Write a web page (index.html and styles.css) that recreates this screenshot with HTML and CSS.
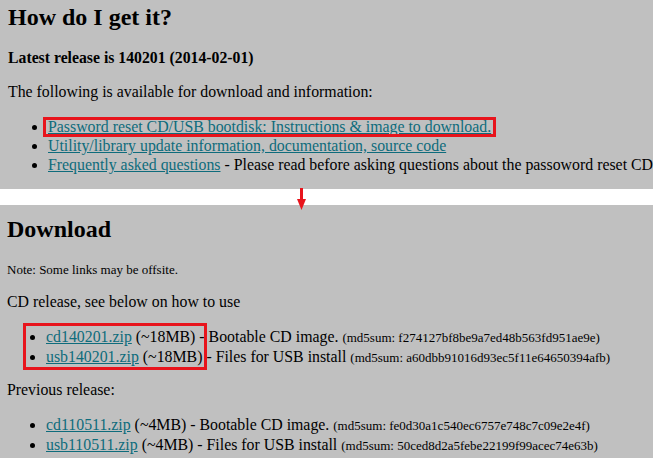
FILE: index.html
```html
<!DOCTYPE html>
<html lang="en">

<head>
    <meta charset="utf-8">
    <title>How do I get it?</title>
    <link rel="stylesheet" href="styles.css">
</head>

<body>
    <div class="shot shot-top">
        <h1>How do I get it?</h1>
        <h3>Latest release is 140201 (2014-02-01)</h3>
        <p>The following is available for download and information:</p>
        <ul>
            <li><span class="mark"><a href="#">Password reset CD/USB bootdisk: Instructions &amp; image to download.</a></span></li>
            <li><a href="#">Utility/library update information, documentation, source code</a></li>
            <li><a href="#">Frequently asked questions</a> - Please read before asking questions about the passoword reset CD.</li>
        </ul>
    </div>

    <!-- arrow between the two shots -->
    <svg class="arrow" width="9" height="22" viewBox="0 0 9 22">
        <rect x="3" y="0" width="3" height="12" fill="#e8141c" />
        <polygon points="0,11 9,11 4.5,22" fill="#e8141c" />
    </svg>

    <div class="shot shot-bottom">
        <h1>Download</h1>
        <p class="note">Note: Some links may be offsite.</p>
        <p>CD release, see below on how to use</p>
        <ul class="boxed">
            <li><a href="#">cd140201.zip</a> (~18MB) - Bootable CD image. <small>(md5sum: f274127bf8be9a7ed48b563fd951ae9e)</small></li>
            <li><a href="#">usb140201.zip</a> (~18MB) - Files for USB install <small>(md5sum: a60dbb91016d93ec5f11e64650394afb)</small></li>
            <div class="box"></div>
        </ul>
        <p class="prev">Previous release:</p>
        <ul>
            <li><a href="#">cd110511.zip</a> (~4MB) - Bootable CD image. <small>(md5sum: fe0d30a1c540ec6757e748c7c09e2e4f)</small></li>
            <li><a href="#">usb110511.zip</a> (~4MB) - Files for USB install <small>(md5sum: 50ced8d2a5febe22199f99acec74e63b)</small></li>
        </ul>
    </div>
</body>

</html>
```

FILE: styles.css
```css
html {
    font-family: 'Liberation Serif', 'Times New Roman', serif;
}

body {
    margin: 0px;
    background-color: #ffffff;
    color: #000000;
    position: relative;
    height: 458px;
    overflow: hidden;
}

.shot {
    background-color: #c0c0c0;
    width: 653px;
    box-sizing: border-box;
    padding: 0px 8px;
    white-space: nowrap;
    overflow: hidden;
}

.shot-top {
    height: 189px;
}

.shot-bottom {
    margin-top: 16px;
    height: 253px;
    padding-left: 7px;
}

h1 {
    font-size: 24px;
    line-height: 28px;
    margin: 3px 0px 0px;
}

.shot-bottom h1 {
    margin-top: 10px;
}

h3 {
    font-size: 15.75px;
    line-height: 19px;
    margin: 17px 0px 0px;
}

p {
    font-size: 15.85px;
    line-height: 19px;
    margin: 15px 0px 0px;
}

.note {
    font-size: 13px;
    line-height: 15px;
    margin-top: 19px;
}

.prev {
    margin-top: 13px;
}

ul {
    font-size: 15.85px;
    line-height: 19px;
    margin: 16px 0px 0px;
    padding-left: 40px;
}

.shot-bottom ul {
    padding-left: 39px;
}

a {
    color: #0e6c7c;
}

small {
    font-size: 13px;
}

.mark {
    position: relative;
}

.mark::after {
    content: "";
    position: absolute;
    left: -5px;
    right: -5px;
    top: -1px;
    bottom: -2px;
    border: 3px solid #e8141c;
}

.boxed {
    position: relative;
}

.box {
    position: absolute;
    left: 16px;
    top: -4px;
    width: 184px;
    height: 47px;
    box-sizing: border-box;
    border: 3px solid #e8141c;
}

.arrow {
    position: absolute;
    left: 297px;
    top: 188px;
}
```
